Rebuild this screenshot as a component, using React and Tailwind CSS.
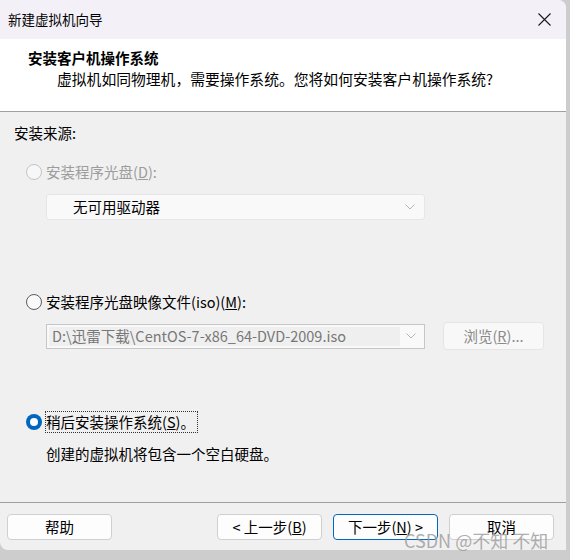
import React from "react";

const font = { fontFamily: '"Noto Sans CJK SC", "Noto Sans", sans-serif' };

function Radio({ checked, disabled }) {
  if (checked) {
    return (
      <span className="w-4 h-4 rounded-full bg-[#0067c0] flex items-center justify-center shrink-0">
        <span className="w-[8px] h-[8px] rounded-full bg-white" />
      </span>
    );
  }
  return (
    <span
      className={
        "w-4 h-4 rounded-full border shrink-0 " +
        (disabled ? "border-[#c4c4c4] bg-[#f7f7f7]" : "border-[#5c5c5c] bg-[#f9f9f9]")
      }
    />
  );
}

function Chevron({ color }) {
  return (
    <svg width="10" height="6" viewBox="0 0 10 6" className="shrink-0">
      <path d="M0.5 0.5 L5 5 L9.5 0.5" fill="none" stroke={color} strokeWidth="1" />
    </svg>
  );
}

function Button({ children, primary }) {
  return (
    <button
      className={
        "h-[26px] w-[105px] rounded-[4px] bg-[#fdfdfd] text-[14.5px] text-black flex items-center justify-center border " +
        (primary ? "border-[#0067c0]" : "border-[#d0d0d0]")
      }
    >
      {children}
    </button>
  );
}

export default function App() {
  return (
    <div className="w-[570px] h-[560px] bg-[#cdcdcd] relative overflow-hidden" style={font}>
      <div className="w-[566px] h-[550px] bg-[#f0f0f0] rounded-tr-[8px] rounded-bl-[8px] overflow-hidden flex flex-col">
        {/* title bar */}
        <div className="h-[39px] bg-[#f3f0f8] flex items-center pl-[8px] pr-[15px] shrink-0">
          <span className="text-[13.5px] text-black flex-1">新建虚拟机向导</span>
          <svg width="13" height="13" viewBox="0 0 13 13">
            <path d="M0.5 0.5 L12.5 12.5 M12.5 0.5 L0.5 12.5" stroke="#1a1a1a" strokeWidth="1.1" />
          </svg>
        </div>

        {/* header */}
        <div className="h-[73px] bg-white border-b border-[#a0a0a0] pt-[9px] shrink-0">
          <div className="pl-[28px] text-[14.5px] font-bold leading-[20px] text-black">安装客户机操作系统</div>
          <div className="pl-[57px] text-[14.8px] leading-[22px] text-black">
            虚拟机如同物理机，需要操作系统。您将如何安装客户机操作系统?
          </div>
        </div>

        {/* body */}
        <div className="h-[391px] border-b border-[#a0a0a0] pt-[11px] pl-[14px] shrink-0 text-[14.5px] leading-[20px]">
          <div className="text-black">安装来源:</div>

          <div className="mt-[19px] ml-[12px] flex items-center gap-[4px] text-[#9c9c9c]">
            <Radio disabled />
            <span>
              安装程序光盘(<u>D</u>):
            </span>
          </div>

          <div className="mt-[12px] ml-[32px] w-[379px] h-[26px] bg-[#f9f9f9] border border-[#e6e6e6] rounded-[3px] flex items-center pl-[26px] pr-[9px]">
            <span className="flex-1 text-black">无可用驱动器</span>
            <Chevron color="#b5b5b5" />
          </div>

          <div className="mt-[72px] ml-[12px] flex items-center gap-[4px] text-black">
            <Radio />
            <span>
              安装程序光盘映像文件(iso)(<u>M</u>):
            </span>
          </div>

          <div className="mt-[10px] ml-[32px] flex items-center gap-[18px]">
            <div className="w-[379px] h-[25px] bg-[#f9f9f9] border border-[#c6c6c6] flex items-center p-[2px]">
              <div className="flex-1 h-full bg-[#efefef] flex items-center pl-[3px] text-[#777777] whitespace-nowrap overflow-hidden">
                D:\迅雷下载\CentOS-7-x86_64-DVD-2009.iso
              </div>
              <div className="w-[22px] flex justify-center">
                <Chevron color="#b5b5b5" />
              </div>
            </div>
            <div className="w-[101px] h-[28px] bg-[#f8f8f8] border border-[#e5e5e5] rounded-[4px] flex items-center justify-center text-[#8a8a8a]">
              浏览(<u>R</u>)...
            </div>
          </div>

          <div className="mt-[61px] ml-[12px] flex items-center gap-[3px] text-black">
            <Radio checked />
            <span className="border border-dotted border-[#333333] leading-[20px] pr-[2px]">
              稍后安装操作系统(<u>S</u>)。
            </span>
          </div>

          <div className="mt-[11px] ml-[32px] text-black">创建的虚拟机将包含一个空白硬盘。</div>
        </div>

        {/* footer */}
        <div className="flex-1 flex items-start pt-[11px] pl-[7px] pr-[12px]">
          <Button>帮助</Button>
          <div className="flex-1" />
          <div className="flex gap-[11px]">
            <Button>
              &lt; 上一步(<u>B</u>)
            </Button>
            <Button primary>
              下一步(<u>N</u>) &gt;
            </Button>
            <Button>取消</Button>
          </div>
        </div>
      </div>

      <div className="absolute left-[404px] top-[528px] text-[18px] leading-[24px] text-[#9a9a9a]/80 whitespace-nowrap">
        CSDN @不知 不知
      </div>
    </div>
  );
}
